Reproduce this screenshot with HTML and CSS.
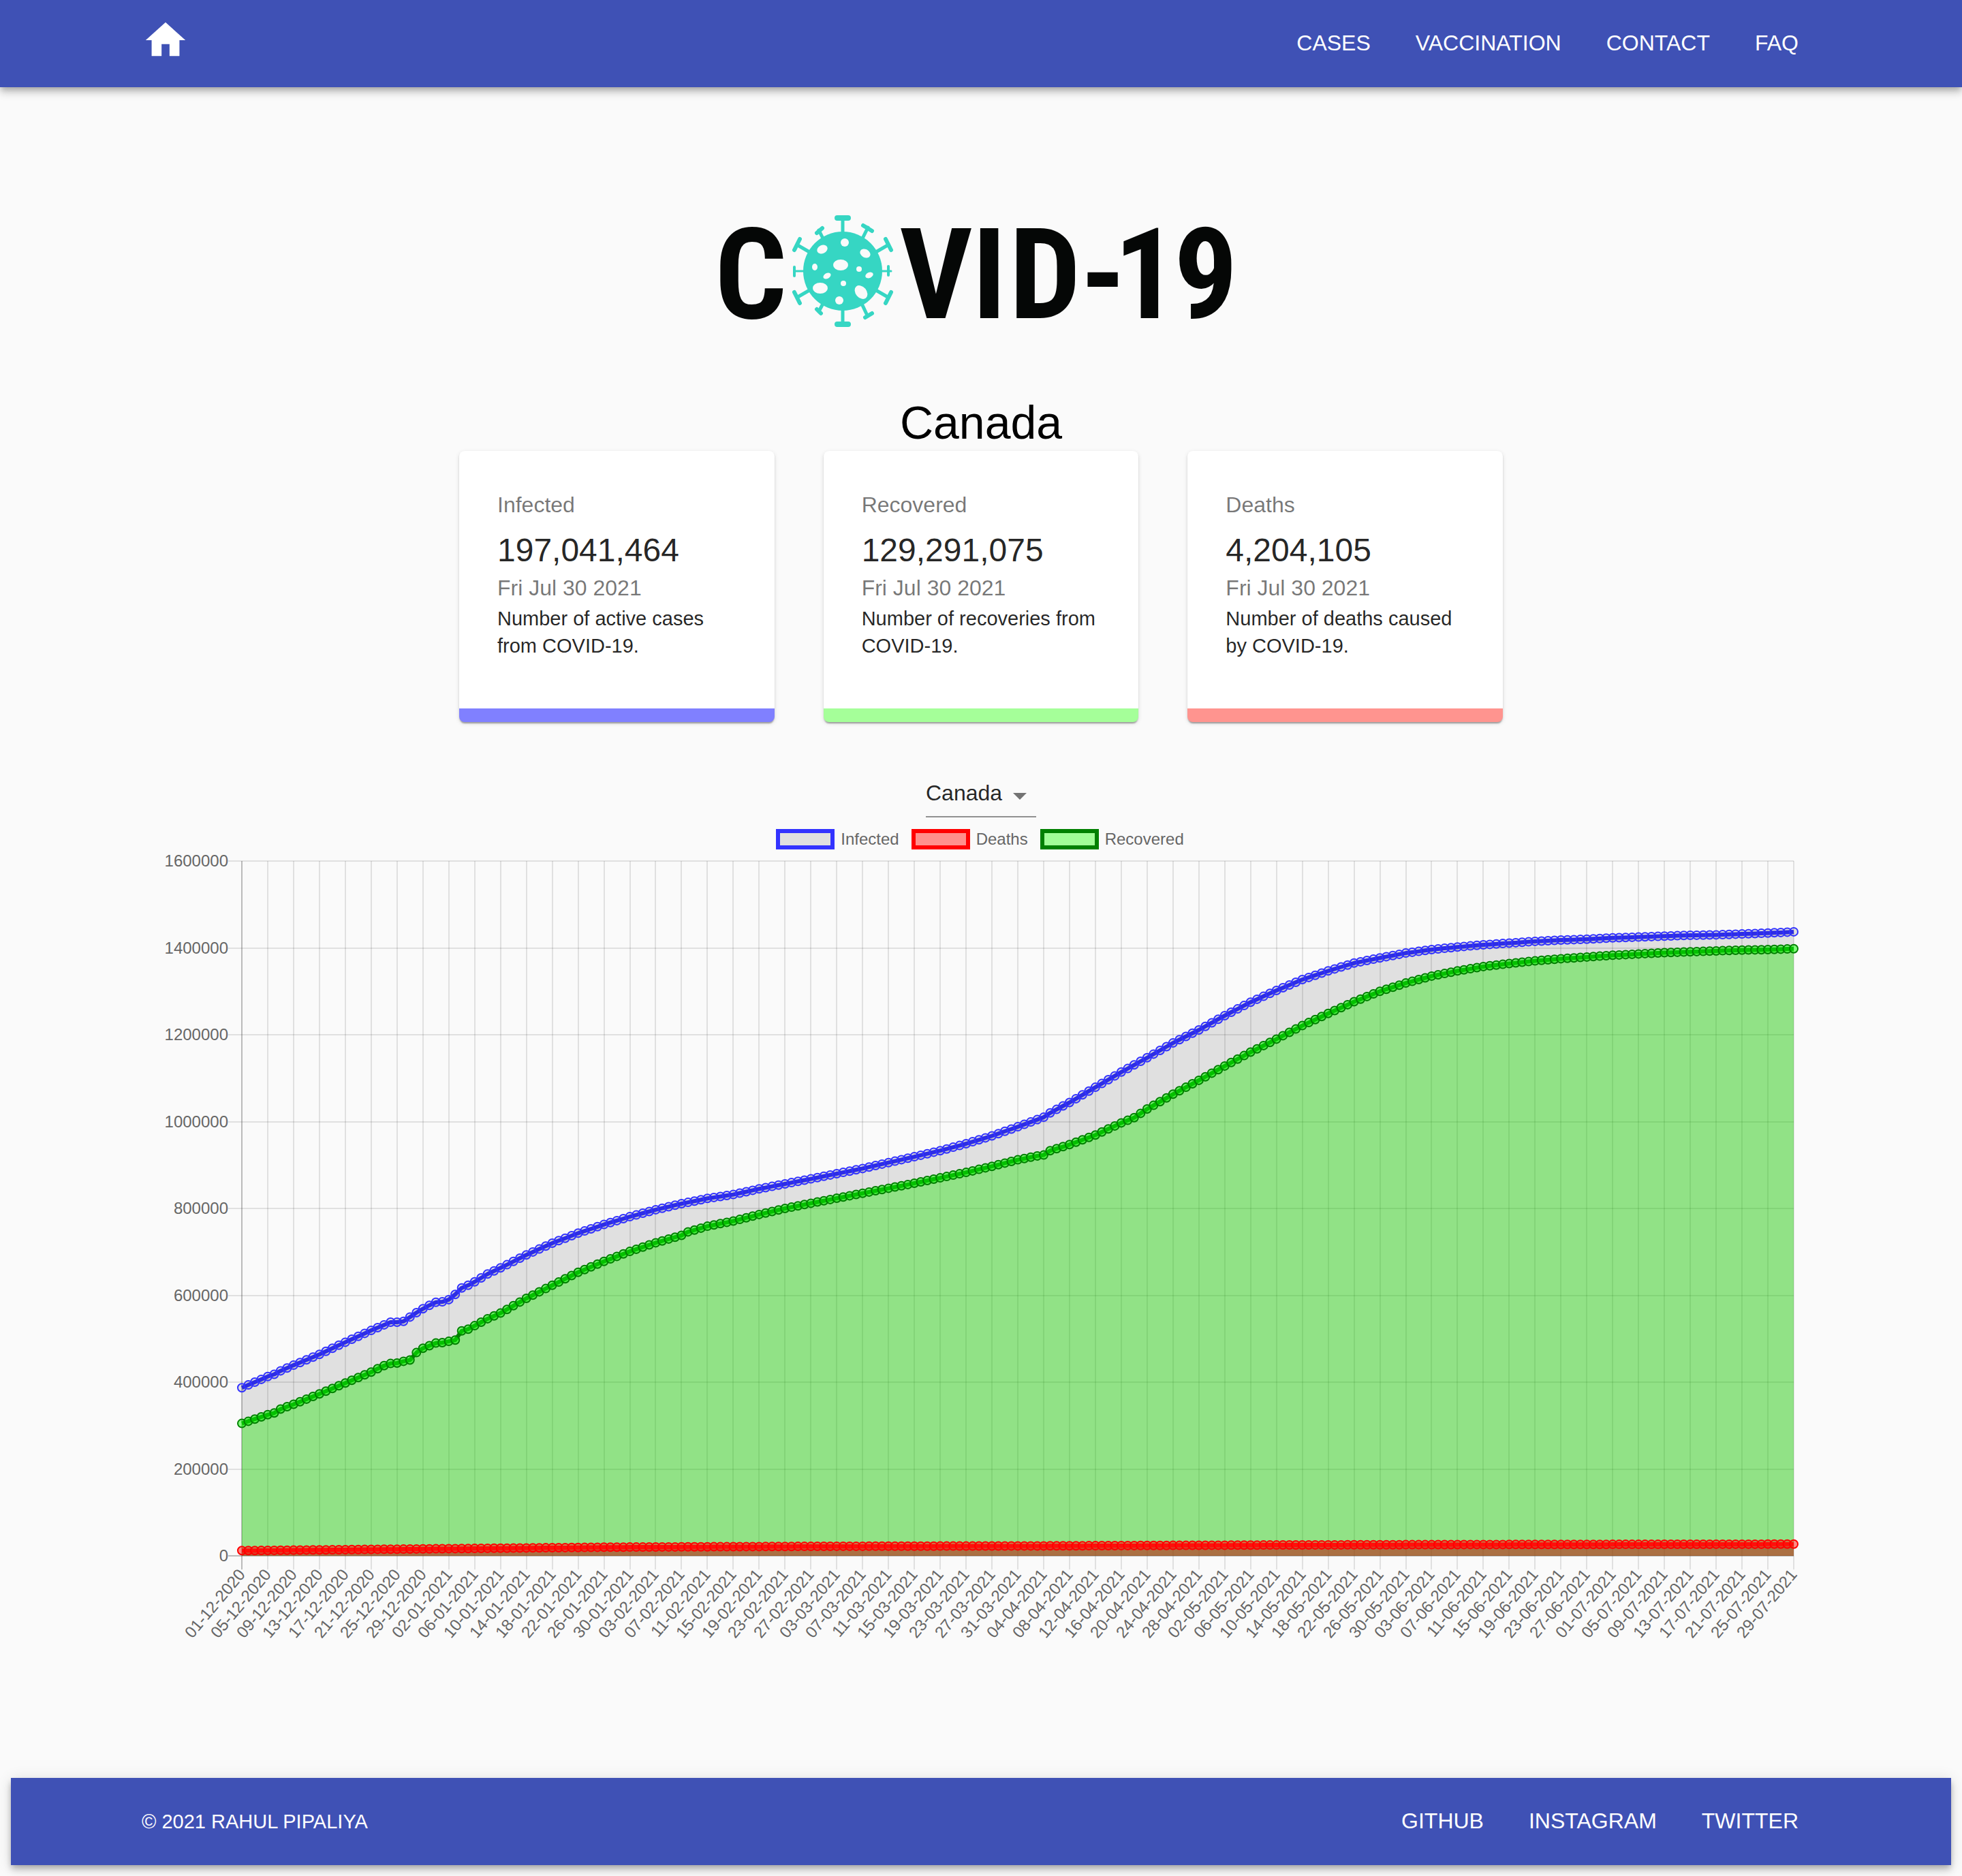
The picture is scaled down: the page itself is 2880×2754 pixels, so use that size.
FILE: index.html
```html
<!DOCTYPE html>
<html lang="en">
<head>
  <meta charset="utf-8">
  <meta name="viewport" content="width=device-width, initial-scale=1">
  <title>COVID-19 Tracker</title>
  <link rel="stylesheet" href="styles.css">
</head>
<body>
  <header class="bar bar-top">
    <div class="bar-inner">
      <a class="home" href="#" aria-label="Home">
        <svg class="home-icon" viewBox="0 0 24 24" aria-hidden="true"><path d="M10 20v-6h4v6h5v-8h3L12 3 2 12h3v8z"/></svg>
      </a>
      <nav class="links" aria-label="Main">
        <a href="#cases">CASES</a>
        <a href="#vaccination">VACCINATION</a>
        <a href="#contact">CONTACT</a>
        <a href="#faq">FAQ</a>
      </nav>
    </div>
  </header>

  <main class="page">
    <h1 class="logo">
      <svg class="logo-art" viewBox="0 0 740 164" role="img" aria-label="COVID-19">
        <g class="logo-text">
          <text x="32" y="151">C</text>
          <text x="304 382 464 549 612 700" y="151">VID-19</text>
        </g>
        <g transform="translate(92 0)">
          <g class="virus-spikes">
            <path class="stem" d="M75 4V160M112 18L104 34M40 22L47 36M9 44L28 55M141 44L122 55M9 120L28 109M141 120L122 109M111 147L103 130M40 141L47 128"/>
            <path class="stem-thin" d="M4 82H146"/>
            <path class="cap-wide" d="M67 4H83M67 160H83"/>
            <path class="cap" d="M105 15L118 23M37 26L45 19M4 51L12 35M146 51L138 35M4 113L12 129M146 113L138 129M118 144L108 150M37 138L43 144"/>
            <path class="cap-thin" d="M4 76V89M142 75V88"/>
          </g>
          <circle class="virus-body" cx="75" cy="82" r="58"/>
          <g class="virus-holes">
            <circle cx="78" cy="40" r="6"/>
            <ellipse cx="45" cy="50" rx="8" ry="6" transform="rotate(-25 45 50)"/>
            <ellipse cx="108" cy="56" rx="8" ry="6" transform="rotate(30 108 56)"/>
            <ellipse cx="72" cy="73" rx="11" ry="8"/>
            <ellipse cx="34" cy="76" rx="4" ry="5"/>
            <circle cx="99" cy="79" r="4"/>
            <ellipse cx="114" cy="88" rx="6" ry="4" transform="rotate(-25 114 88)"/>
            <ellipse cx="52" cy="89" rx="6" ry="4" transform="rotate(-30 52 89)"/>
            <circle cx="76" cy="100" r="4"/>
            <ellipse cx="42" cy="107" rx="11" ry="8"/>
            <ellipse cx="102" cy="113" rx="11" ry="8" transform="rotate(50 102 113)"/>
            <circle cx="70" cy="125" r="6"/>
          </g>
        </g>
      </svg>
    </h1>

    <h2 class="country">Canada</h2>

    <section class="cards" aria-label="Totals">
      <article class="card card-infected">
        <h3 class="card-title">Infected</h3>
        <p class="card-number">197,041,464</p>
        <p class="card-date">Fri Jul 30 2021</p>
        <p class="card-note">Number of active cases from COVID-19.</p>
      </article>
      <article class="card card-recovered">
        <h3 class="card-title">Recovered</h3>
        <p class="card-number">129,291,075</p>
        <p class="card-date">Fri Jul 30 2021</p>
        <p class="card-note">Number of recoveries from COVID-19.</p>
      </article>
      <article class="card card-deaths">
        <h3 class="card-title">Deaths</h3>
        <p class="card-number">4,204,105</p>
        <p class="card-date">Fri Jul 30 2021</p>
        <p class="card-note">Number of deaths caused by COVID-19.</p>
      </article>
    </section>

    <div class="picker">
      <select class="picker-select" aria-label="Country">
        <option>Canada</option>
      </select>
      <svg class="picker-arrow" viewBox="0 0 24 24" aria-hidden="true"><path d="M7 10l5 5 5-5z"/></svg>
    </div>

    <section class="chart" aria-label="Cases over time">
      <ul class="legend">
        <li><span class="swatch swatch-infected"></span>Infected</li>
        <li><span class="swatch swatch-deaths"></span>Deaths</li>
        <li><span class="swatch swatch-recovered"></span>Recovered</li>
      </ul>
      <svg class="plot" id="plot" viewBox="0 0 2464 1180" role="img" aria-label="Line chart of infected, deaths and recovered"></svg>
    </section>
  </main>

  <footer class="bar bar-bottom">
    <div class="bar-inner">
      <p class="copyright">© 2021 RAHUL PIPALIYA</p>
      <nav class="links" aria-label="Social">
        <a href="#github">GITHUB</a>
        <a href="#instagram">INSTAGRAM</a>
        <a href="#twitter">TWITTER</a>
      </nav>
    </div>
  </footer>
  <script src="chart.js"></script>
</body>
</html>
```
FILE: styles.css
```css
* {
  box-sizing: border-box;
}

body {
  margin: 0;
  background: #fafafa;
  color: rgba(0, 0, 0, 0.87);
  font-family: "Liberation Sans", Arial, Helvetica, sans-serif;
  font-size: 32px;
  line-height: 48px;
}

h1, h2, h3, p, ul {
  margin: 0;
  padding: 0;
  font-weight: 400;
}

/* Top and bottom bars */
.bar {
  background: #3f51b5;
  color: #fff;
  box-shadow: 0 4px 8px -2px rgba(0, 0, 0, 0.2), 0 8px 10px rgba(0, 0, 0, 0.14), 0 2px 20px rgba(0, 0, 0, 0.12);
}

.bar-bottom {
  margin: 0 16px 16px;
}

.bar-inner {
  display: flex;
  align-items: center;
  justify-content: space-between;
  max-width: 2464px;
  min-height: 128px;
  margin: 0 auto;
}

.home {
  display: block;
  height: 80px;
}

.home-icon {
  display: block;
  width: 70px;
  height: 70px;
  fill: #fff;
}

.links {
  display: flex;
  gap: 66px;
  padding: 0 32px 2px 0;
}

.links a {
  color: inherit;
  text-decoration: none;
}

.copyright {
  font-size: 29px;
}

/* Page content */
.page {
  display: flex;
  flex-direction: column;
  align-items: center;
  max-width: 2464px;
  margin: 0 auto;
  padding: 188px 0 183px;
}

.logo-art {
  display: block;
  width: 740px;
  max-width: 100%;
  overflow: visible;
}

.logo-text {
  fill: #050706;
  font-family: "Roboto Condensed", "Liberation Sans Narrow", "Liberation Sans", sans-serif;
  font-size: 186px;
  font-weight: 700;
  text-anchor: middle;
}

.virus-spikes {
  fill: none;
  stroke: #36d6c3;
  stroke-linecap: round;
}

.stem { stroke-width: 5px; }
.stem-thin { stroke-width: 3px; }
.cap { stroke-width: 6px; }
.cap-wide { stroke-width: 8px; }
.cap-thin { stroke-width: 4px; }
.virus-body { fill: #36d6c3; }
.virus-holes { fill: #fafafa; }

.country {
  margin-top: 98px;
  color: #000;
  font-size: 68px;
  line-height: 84px;
}

.cards {
  display: grid;
  grid-template-columns: repeat(3, 1fr);
  gap: 72px;
  width: 1532px;
  max-width: 100%;
}

.card {
  padding: 55px 56px 72px;
  border-bottom: 20px solid;
  border-radius: 8px;
  background: #fff;
  box-shadow: 0 4px 2px -2px rgba(0, 0, 0, 0.2), 0 2px 2px rgba(0, 0, 0, 0.14), 0 2px 6px rgba(0, 0, 0, 0.12);
}

.card-infected { border-bottom-color: #8080ff; }
.card-recovered { border-bottom-color: #a5ff99; }
.card-deaths { border-bottom-color: #ff948f; }

.card-title {
  margin-bottom: 12px;
  color: rgba(0, 0, 0, 0.54);
  font-size: 32px;
}

.card-number {
  font-size: 48px;
  line-height: 62px;
}

.card-date {
  margin-bottom: 1px;
  color: rgba(0, 0, 0, 0.54);
}

.card-note {
  font-size: 29px;
  line-height: 40px;
}

/* Country select */
.picker {
  position: relative;
  margin-top: 78px;
}

.picker-select {
  display: block;
  width: 162px;
  height: 62px;
  padding: 0 48px 8px 0;
  border: 0;
  border-bottom: 2px solid rgba(0, 0, 0, 0.42);
  border-radius: 0;
  appearance: none;
  background: none;
  color: inherit;
  font: inherit;
}

.picker-arrow {
  position: absolute;
  top: 6px;
  right: 0;
  width: 48px;
  height: 48px;
  fill: rgba(0, 0, 0, 0.54);
  pointer-events: none;
}

/* Chart */
.chart {
  width: 100%;
  margin-top: 17px;
}

.legend {
  display: flex;
  justify-content: center;
  gap: 18px;
  padding-right: 3px;
  color: #666;
  font-size: 24px;
  line-height: 30px;
  list-style: none;
}

.legend li {
  display: flex;
  gap: 9px;
}

.swatch {
  width: 86px;
  height: 30px;
  border: 6px solid;
}

.swatch-infected { border-color: #3333ff; background: #e0e0e0; }
.swatch-deaths { border-color: #ff0000; background: #ff908c; }
.swatch-recovered { border-color: #008000; background: #a1fd97; }

.plot {
  display: block;
  width: 100%;
}

.plot text {
  fill: #666;
  font-size: 24px;
  text-anchor: end;
}

.grid { stroke: rgba(0, 0, 0, 0.1); stroke-width: 2px; }
.axis { stroke: rgba(0, 0, 0, 0.25); stroke-width: 2px; }

.area { stroke: none; }
.line { fill: none; stroke-width: 6px; stroke-linejoin: round; }
.dot { stroke-width: 2px; }

.area.infected, .infected .dot { fill: rgba(0, 0, 0, 0.1); }
.infected .line, .infected .dot { stroke: #3333ff; }
.area.deaths { fill: rgba(212, 33, 20, 0.58); }
.deaths .dot { fill: rgba(255, 30, 20, 0.5); }
.deaths .line, .deaths .dot { stroke: #ff0000; }
.area.recovered { fill: rgba(30, 255, 0, 0.4); }
.recovered .dot { fill: rgba(10, 255, 0, 0.5); }
.recovered .line, .recovered .dot { stroke: #008000; }
```
FILE: chart.js
```js
(function () {
  var NS = "http://www.w3.org/2000/svg";
  var plot = document.getElementById("plot");
  var area = { left: 147, right: 2425, top: 17, bottom: 1037 };
  var days = 240;
  var maxValue = 1600;

  // Cumulative totals in thousands, as [day, value] pairs.
  var series = {
    infected: [[0,387],[4,413],[5,418],[6,426],[8,439],[12,464],[16,492],[20,519],[22,532],[23,538],[24,538],[25,540],[26,550],[27,560],[28,569],[29,577],[30,584],[31,585],[32,590],[33,602],[34,617],[35,623],[36,631],[38,649],[40,663],[44,693],[48,720],[52,743],[56,763],[60,781],[64,797],[68,811],[72,823],[76,832],[80,845],[88,868],[96,892],[104,919],[108,933],[112,949],[116,967],[120,988],[124,1010],[125,1020],[128,1044],[132,1079],[136,1114],[140,1147],[144,1181],[148,1211],[152,1244],[156,1275],[160,1302],[164,1327],[168,1347],[172,1365],[176,1377],[180,1388],[184,1396],[188,1402],[192,1407],[196,1411],[200,1415],[204,1418],[208,1420],[212,1423],[216,1425],[220,1427],[224,1429],[228,1430],[232,1432],[236,1434],[240,1437]],
    recovered: [[0,305],[4,325],[5,329],[6,338],[8,349],[12,373],[16,398],[20,423],[21,431],[22,438],[23,443],[24,444],[25,448],[26,451],[27,468],[28,478],[29,484],[30,490],[31,491],[32,494],[33,497],[34,518],[35,522],[36,530],[38,546],[40,559],[44,593],[48,623],[50,638],[52,653],[56,678],[60,701],[64,721],[68,738],[69,746],[72,759],[76,771],[80,786],[84,800],[88,812],[96,835],[104,858],[112,883],[116,897],[120,912],[123,921],[124,923],[125,933],[128,947],[132,969],[136,997],[138,1009],[140,1029],[144,1063],[148,1095],[152,1128],[156,1160],[160,1190],[164,1221],[168,1249],[172,1276],[176,1300],[180,1319],[184,1335],[188,1347],[192,1357],[196,1364],[200,1370],[204,1375],[208,1379],[212,1383],[216,1386],[220,1389],[224,1391],[228,1393],[232,1395],[236,1396],[240,1398]],
    deaths: [[0,12],[28,16],[57,20],[90,22],[125,23],[160,25],[190,26],[240,27]]
  };

  function add(parent, tag, attrs, text) {
    var node = document.createElementNS(NS, tag);
    Object.keys(attrs).forEach(function (key) { node.setAttribute(key, attrs[key]); });
    if (text) { node.textContent = text; }
    parent.appendChild(node);
    return node;
  }

  function xAt(day) { return area.left + (area.right - area.left) * day / days; }
  function yAt(value) { return area.bottom - (area.bottom - area.top) * value / maxValue; }

  function valueAt(points, day) {
    for (var i = 1; i < points.length; i++) {
      if (day <= points[i][0]) {
        var a = points[i - 1];
        var b = points[i];
        return a[1] + (b[1] - a[1]) * (day - a[0]) / (b[0] - a[0]);
      }
    }
    return points[points.length - 1][1];
  }

  function coordsOf(name) {
    var coords = [];
    for (var d = 0; d <= days; d++) {
      coords.push([xAt(d).toFixed(1), yAt(valueAt(series[name], d)).toFixed(1)]);
    }
    return coords;
  }

  function pathOf(coords) {
    return "M" + coords.map(function (c) { return c.join(" "); }).join("L");
  }

  function dateLabel(day) {
    var iso = new Date(Date.UTC(2020, 11, 1 + day)).toISOString();
    return iso.slice(8, 10) + "-" + iso.slice(5, 7) + "-" + iso.slice(0, 4);
  }

  for (var day = 0; day <= days; day += 4) {
    var x = Math.round(xAt(day));
    add(plot, "line", { "class": day ? "grid" : "axis", x1: x, x2: x, y1: area.top, y2: area.bottom + 20 });
    add(plot, "text", { transform: "translate(" + x + " " + (area.bottom + 23) + ") rotate(-50)", y: 8 }, dateLabel(day));
  }
  for (var value = 0; value <= maxValue; value += 200) {
    var y = Math.round(yAt(value));
    add(plot, "line", { "class": value ? "grid" : "axis", x1: area.left - 20, x2: area.right, y1: y, y2: y });
    add(plot, "text", { x: area.left - 20, y: y + 8 }, String(value * 1000));
  }

  // All areas go below all lines, so that no fill tints a line.
  var order = ["recovered", "deaths", "infected"];
  order.forEach(function (name) {
    add(plot, "path", { "class": "area " + name, d: pathOf(coordsOf(name)) + "V" + area.bottom + "H" + area.left + "Z" });
  });
  order.forEach(function (name) {
    var group = add(plot, "g", { "class": name });
    var coords = coordsOf(name);
    add(group, "path", { "class": "line", d: pathOf(coords) });
    coords.forEach(function (c) {
      add(group, "circle", { "class": "dot", cx: c[0], cy: c[1], r: 6 });
    });
  });
})();
```
